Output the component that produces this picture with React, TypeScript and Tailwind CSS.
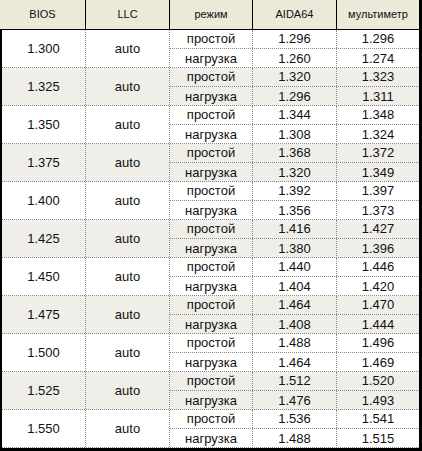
import React from "react";

const ROWS = [
  { bios: "1.300", idle: ["1.296", "1.296"], load: ["1.260", "1.274"] },
  { bios: "1.325", idle: ["1.320", "1.323"], load: ["1.296", "1.311"] },
  { bios: "1.350", idle: ["1.344", "1.348"], load: ["1.308", "1.324"] },
  { bios: "1.375", idle: ["1.368", "1.372"], load: ["1.320", "1.349"] },
  { bios: "1.400", idle: ["1.392", "1.397"], load: ["1.356", "1.373"] },
  { bios: "1.425", idle: ["1.416", "1.427"], load: ["1.380", "1.396"] },
  { bios: "1.450", idle: ["1.440", "1.446"], load: ["1.404", "1.420"] },
  { bios: "1.475", idle: ["1.464", "1.470"], load: ["1.408", "1.444"] },
  { bios: "1.500", idle: ["1.488", "1.496"], load: ["1.464", "1.469"] },
  { bios: "1.525", idle: ["1.512", "1.520"], load: ["1.476", "1.493"] },
  { bios: "1.550", idle: ["1.536", "1.541"], load: ["1.488", "1.515"] },
];

const HEAD = [
  { label: "BIOS", w: "w-[86px]" },
  { label: "LLC", w: "w-[84px]" },
  { label: "режим", w: "w-[83px]" },
  { label: "AIDA64", w: "w-[84px]" },
  { label: "мультиметр", w: "w-[82px]" },
];

function SubRow({ mode, vals, last }: { mode: string; vals: string[]; last?: boolean }) {
  return (
    <div
      className={`flex h-[19px] items-center ${
        last ? "h-[18px]" : "border-b border-dotted border-[#8a8a8a]"
      }`}
    >
      <div className="flex h-full w-[83px] items-center justify-center border-r border-dotted border-[#8a8a8a]">
        {mode}
      </div>
      <div className="flex h-full w-[84px] items-center justify-center border-r border-dotted border-[#8a8a8a]">
        {vals[0]}
      </div>
      <div className="flex h-full w-[82px] items-center justify-center">{vals[1]}</div>
    </div>
  );
}

export default function App() {
  return (
    <div
      className="w-[422px] h-[451px] border-r-[3px] border-b-[3px] border-black bg-white text-[#111]"
      style={{ fontFamily: '"Liberation Sans", Arial, sans-serif' }}
    >
      <div className="flex h-[30px] border-b border-black bg-[#ECE9D8] text-[11px]">
        {HEAD.map((h, i) => (
          <div
            key={h.label}
            className={`flex items-center justify-center ${h.w} ${
              i < HEAD.length - 1 ? "border-r border-black" : ""
            }`}
          >
            {h.label}
          </div>
        ))}
      </div>

      <div className="border-l-2 border-black text-[13px]">
        {ROWS.map((r, idx) => (
          <div
            key={r.bios}
            className={`flex h-[38px] border-b border-dotted border-[#8a8a8a] ${
              idx % 2 === 1 ? "bg-[#EFEEE8]" : "bg-white"
            }`}
          >
            <div className="flex w-[84px] items-center justify-center border-r border-dotted border-[#8a8a8a]">
              {r.bios}
            </div>
            <div className="flex w-[84px] items-center justify-center border-r border-dotted border-[#8a8a8a]">
              auto
            </div>
            <div className="flex flex-col">
              <SubRow mode="простой" vals={r.idle} />
              <SubRow mode="нагрузка" vals={r.load} last />
            </div>
          </div>
        ))}
      </div>
    </div>
  );
}
